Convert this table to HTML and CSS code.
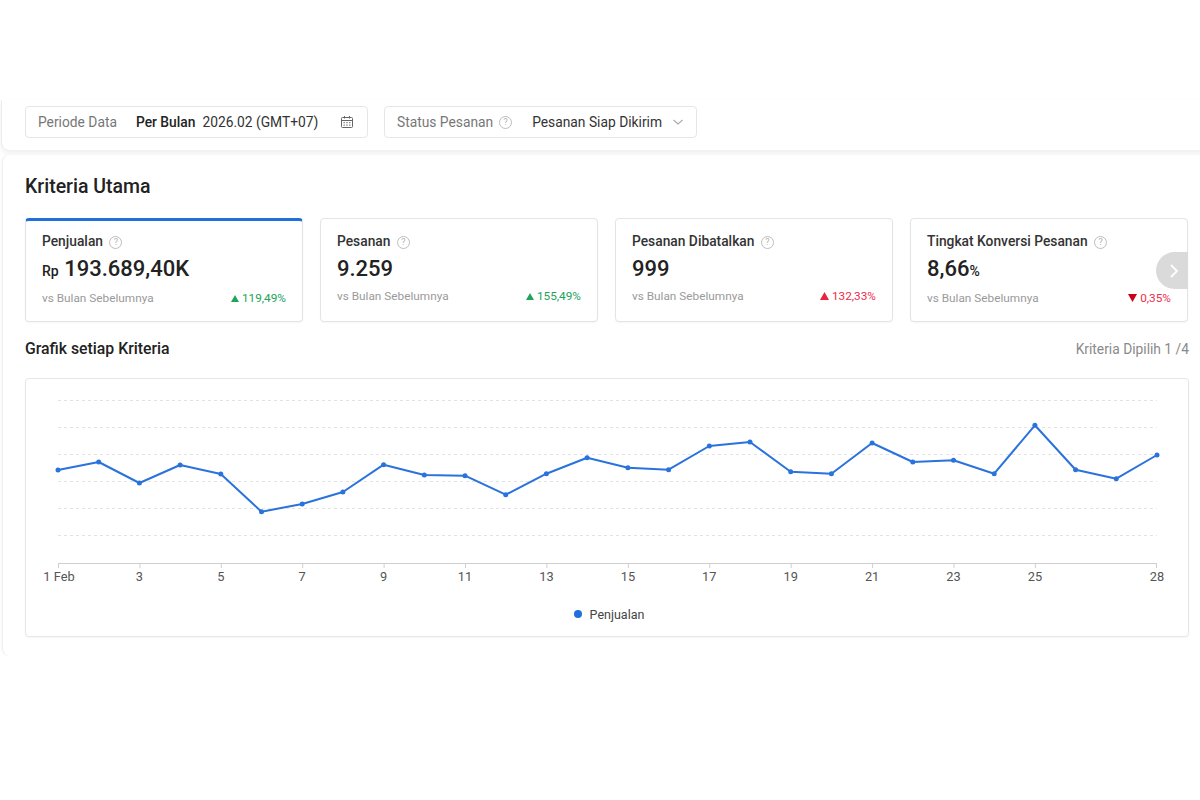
FILE: index.html
```html
<!DOCTYPE html>
<html lang="id">
<head>
<meta charset="utf-8">
<title>Kriteria Utama</title>
<link rel="stylesheet" href="styles.css">
</head>
<body>
<div class="page">
  <section class="filter-panel">
    <div class="filter-box filter-period">
      <span class="filter-label">Periode Data</span>
      <span class="filter-strong">Per Bulan</span>
      <span class="filter-value">2026.02 (GMT+07)</span>
      <svg class="cal-icon" width="14" height="14" viewBox="0 0 14 14">
        <rect x="1.5" y="2.5" width="11" height="10" rx="1" fill="none" stroke="#666" stroke-width="1"/>
        <line x1="1.5" y1="5.5" x2="12.5" y2="5.5" stroke="#666" stroke-width="1"/>
        <line x1="4.5" y1="1" x2="4.5" y2="3.5" stroke="#666" stroke-width="1"/>
        <line x1="9.5" y1="1" x2="9.5" y2="3.5" stroke="#666" stroke-width="1"/>
        <g fill="#777">
          <rect x="3.5" y="7" width="1.3" height="1.2"/><rect x="6.3" y="7" width="1.3" height="1.2"/><rect x="9.1" y="7" width="1.3" height="1.2"/>
          <rect x="3.5" y="9.5" width="1.3" height="1.2"/><rect x="6.3" y="9.5" width="1.3" height="1.2"/><rect x="9.1" y="9.5" width="1.3" height="1.2"/>
        </g>
      </svg>
    </div>
    <div class="filter-box filter-status">
      <span class="filter-label">Status Pesanan</span>
      <span class="help help-filter">?</span>
      <span class="filter-value status-value">Pesanan Siap Dikirim</span>
      <svg class="chev-icon" width="12" height="8" viewBox="0 0 12 8">
        <polyline points="1.5,2 6,6 10.5,2" fill="none" stroke="#aaa" stroke-width="1.1"/>
      </svg>
    </div>
  </section>

  <section class="main-panel">
    <div class="content">
      <h2 class="section-title">Kriteria Utama</h2>
      <div class="cards">
        <div class="card card-active">
          <div class="card-title">Penjualan <span class="help">?</span></div>
          <div class="card-value"><span class="unit-pre">Rp</span> 193.689,40K</div>
          <div class="card-foot">
            <span class="vs">vs Bulan Sebelumnya</span>
            <span class="delta up"><svg width="8" height="7" viewBox="0 0 8 7"><polygon points="4,0 8,7 0,7" fill="#22a35a"/></svg>119,49%</span>
          </div>
        </div>
        <div class="card">
          <div class="card-title">Pesanan <span class="help">?</span></div>
          <div class="card-value">9.259</div>
          <div class="card-foot">
            <span class="vs">vs Bulan Sebelumnya</span>
            <span class="delta up"><svg width="8" height="7" viewBox="0 0 8 7"><polygon points="4,0 8,7 0,7" fill="#22a35a"/></svg>155,49%</span>
          </div>
        </div>
        <div class="card">
          <div class="card-title">Pesanan Dibatalkan <span class="help">?</span></div>
          <div class="card-value">999</div>
          <div class="card-foot">
            <span class="vs">vs Bulan Sebelumnya</span>
            <span class="delta bad"><svg width="9" height="8" viewBox="0 0 9 8"><polygon points="4.5,0 9,8 0,8" fill="#e8243f"/></svg>132,33%</span>
          </div>
        </div>
        <div class="card card-last">
          <div class="card-title">Tingkat Konversi Pesanan <span class="help">?</span></div>
          <div class="card-value">8,66<span class="unit-post">%</span></div>
          <div class="card-foot">
            <span class="vs">vs Bulan Sebelumnya</span>
            <span class="delta bad"><svg width="9" height="8" viewBox="0 0 9 8"><polygon points="0,0 9,0 4.5,8" fill="#c8001a"/></svg>0,35%</span>
          </div>
          <div class="next-btn">
            <svg width="10" height="16" viewBox="0 0 10 16"><polyline points="2,2 8,8 2,14" fill="none" stroke="#fff" stroke-width="1.8"/></svg>
          </div>
        </div>
      </div>

      <div class="chart-head">
        <h3 class="chart-title">Grafik setiap Kriteria</h3>
        <span class="chart-count">Kriteria Dipilih 1 /4</span>
      </div>

      <div class="chart-box">
        <svg class="chart" width="1162" height="215" viewBox="0 0 1162 215">
          <g stroke="#e3e3e3" stroke-width="1" stroke-dasharray="3 3">
            <line x1="32" y1="21.5" x2="1131" y2="21.5"/>
            <line x1="32" y1="48.5" x2="1131" y2="48.5"/>
            <line x1="32" y1="75.5" x2="1131" y2="75.5"/>
            <line x1="32" y1="102.5" x2="1131" y2="102.5"/>
            <line x1="32" y1="129.5" x2="1131" y2="129.5"/>
            <line x1="32" y1="156.5" x2="1131" y2="156.5"/>
          </g>
          <line x1="32" y1="184.5" x2="1131" y2="184.5" stroke="#cfcfcf" stroke-width="1"/>
          <g stroke="#cfcfcf" stroke-width="1">
            <line x1="32.5" y1="184" x2="32.5" y2="189"/>
            <line x1="113.9" y1="184" x2="113.9" y2="189"/>
            <line x1="195.3" y1="184" x2="195.3" y2="189"/>
            <line x1="276.7" y1="184" x2="276.7" y2="189"/>
            <line x1="358.1" y1="184" x2="358.1" y2="189"/>
            <line x1="439.5" y1="184" x2="439.5" y2="189"/>
            <line x1="520.9" y1="184" x2="520.9" y2="189"/>
            <line x1="602.4" y1="184" x2="602.4" y2="189"/>
            <line x1="683.8" y1="184" x2="683.8" y2="189"/>
            <line x1="765.2" y1="184" x2="765.2" y2="189"/>
            <line x1="846.6" y1="184" x2="846.6" y2="189"/>
            <line x1="928" y1="184" x2="928" y2="189"/>
            <line x1="1009.4" y1="184" x2="1009.4" y2="189"/>
            <line x1="1130.5" y1="184" x2="1130.5" y2="189"/>
          </g>
          <g class="axis-labels" text-anchor="middle">
            <text x="33" y="202">1 Feb</text>
            <text x="113.4" y="202">3</text>
            <text x="194.8" y="202">5</text>
            <text x="276.2" y="202">7</text>
            <text x="357.6" y="202">9</text>
            <text x="439" y="202">11</text>
            <text x="520.4" y="202">13</text>
            <text x="601.9" y="202">15</text>
            <text x="683.3" y="202">17</text>
            <text x="764.7" y="202">19</text>
            <text x="846.1" y="202">21</text>
            <text x="927.5" y="202">23</text>
            <text x="1008.9" y="202">25</text>
            <text x="1131" y="202">28</text>
          </g>
          <polyline fill="none" stroke="#2a72dc" stroke-width="2" stroke-linejoin="round"
            points="32,91 72.7,83 113.4,104 154.1,86 194.8,95 235.5,132.7 276.2,125 316.9,113 357.6,85.7 398.3,96 439,96.7 479.7,115.7 520.4,94.7 561.1,78.7 601.9,88.7 642.6,90.7 683.3,67 724,63 764.7,92.7 805.4,94.7 846.1,64 886.8,83 927.5,81.3 968.2,94.7 1008.9,46.3 1049.6,90.7 1090.3,99.7 1131,76"/>
          <g fill="#2a72dc">
            <circle cx="32" cy="91" r="2.5"/><circle cx="72.7" cy="83" r="2.5"/><circle cx="113.4" cy="104" r="2.5"/><circle cx="154.1" cy="86" r="2.5"/>
            <circle cx="194.8" cy="95" r="2.5"/><circle cx="235.5" cy="132.7" r="2.5"/><circle cx="276.2" cy="125" r="2.5"/><circle cx="316.9" cy="113" r="2.5"/>
            <circle cx="357.6" cy="85.7" r="2.5"/><circle cx="398.3" cy="96" r="2.5"/><circle cx="439" cy="96.7" r="2.5"/><circle cx="479.7" cy="115.7" r="2.5"/>
            <circle cx="520.4" cy="94.7" r="2.5"/><circle cx="561.1" cy="78.7" r="2.5"/><circle cx="601.9" cy="88.7" r="2.5"/><circle cx="642.6" cy="90.7" r="2.5"/>
            <circle cx="683.3" cy="67" r="2.5"/><circle cx="724" cy="63" r="2.5"/><circle cx="764.7" cy="92.7" r="2.5"/><circle cx="805.4" cy="94.7" r="2.5"/>
            <circle cx="846.1" cy="64" r="2.5"/><circle cx="886.8" cy="83" r="2.5"/><circle cx="927.5" cy="81.3" r="2.5"/><circle cx="968.2" cy="94.7" r="2.5"/>
            <circle cx="1008.9" cy="46.3" r="2.5"/><circle cx="1049.6" cy="90.7" r="2.5"/><circle cx="1090.3" cy="99.7" r="2.5"/><circle cx="1131" cy="76" r="2.5"/>
          </g>
        </svg>
        <div class="legend">
          <span class="legend-dot"></span>
          <span class="legend-text">Penjualan</span>
        </div>
      </div>
    </div>
  </section>
</div>
</body>
</html>
```

FILE: styles.css
```css
* { box-sizing: border-box; }

html, body {
  margin: 0;
  padding: 0;
  background: #ffffff;
  overflow: hidden;
}

body {
  font-family: Roboto, "Noto Sans", "Liberation Sans", sans-serif;
  color: #333;
  width: 1200px;
  height: 800px;
}

.page {
  width: 1200px;
  overflow: hidden;
  padding-top: 100px;
}

/* top filter panel */
.filter-panel {
  margin-left: 1px;
  width: 1240px;
  background: #fff;
  border-left: 1px solid #ececec;
  border-radius: 0 0 0 8px;
  box-shadow: 0 3px 6px rgba(0, 0, 0, 0.07);
  padding: 6px 0 12px 23px;
  display: flex;
  gap: 16px;
}

.filter-box {
  height: 32px;
  border: 1px solid #e6e6e6;
  border-radius: 4px;
  display: flex;
  align-items: center;
  font-size: 13.8px;
  white-space: nowrap;
}

.filter-period { width: 343px; padding: 0 13px 0 12px; }
.filter-status { width: 313px; padding: 0 12px 0 12px; }

.filter-label { color: #777; }
.filter-strong { color: #222; font-weight: 500; margin-left: 19px; }
.filter-value { color: #333; margin-left: 7px; }
.status-value { margin-left: 20px; color: #333; }
.cal-icon { margin-left: auto; }
.chev-icon { margin-left: auto; }

.help {
  display: inline-flex;
  align-items: center;
  justify-content: center;
  width: 13px;
  height: 13px;
  border: 1px solid #bdbdbd;
  border-radius: 50%;
  color: #b3b3b3;
  font-size: 9px;
  font-weight: 400;
  line-height: 1;
  vertical-align: 1px;
  margin-left: 3px;
}
.help-filter { margin-left: 6px; }

/* main panel */
.main-panel {
  margin-top: 5px;
  margin-left: 2px;
  width: 1240px;
  background: #fff;
  border-left: 1px solid #efefef;
  border-radius: 8px 0 0 8px;
  box-shadow: -1px 0 3px rgba(0, 0, 0, 0.03);
  padding: 20px 0 19px 22px;
}

.content { width: 1164px; }

.section-title {
  margin: 0;
  font-size: 19.5px;
  line-height: 24px;
  font-weight: 500;
  color: #222;
}

.cards {
  margin-top: 19px;
  display: grid;
  grid-template-columns: repeat(4, 278px);
  gap: 17px;
}

.card {
  position: relative;
  height: 104px;
  border: 1px solid #e4e4e4;
  border-radius: 4px;
  background: #fff;
  box-shadow: 0 1px 2px rgba(0, 0, 0, 0.04);
  padding: 13px 16px 0 16px;
}

.card-active {
  border-top: 3px solid #1f6fdc;
  padding-top: 11px;
}

.card-title {
  font-size: 13.8px;
  line-height: 18px;
  font-weight: 500;
  color: #333;
  white-space: nowrap;
}

.card-value {
  margin-top: 5px;
  font-size: 22px;
  line-height: 28px;
  font-weight: 500;
  color: #222;
}
.unit-pre { font-size: 14px; font-weight: 500; }
.unit-post { font-size: 14px; font-weight: 500; }

.card-foot {
  margin-top: 5px;
  display: flex;
  justify-content: space-between;
  align-items: center;
  font-size: 11.8px;
  line-height: 16px;
}

.vs { color: #9a9a9a; }

.delta { display: inline-flex; align-items: center; gap: 3px; }
.delta.up { color: #22a35a; }
.delta.bad { color: #ee2c4a; }

.next-btn {
  position: absolute;
  right: -1px;
  top: 33px;
  width: 32px;
  height: 37px;
  border-radius: 19px 0 0 19px;
  background: #dadada;
  display: flex;
  align-items: center;
  justify-content: center;
  padding-left: 4px;
}

/* chart */
.chart-head {
  margin-top: 17px;
  display: flex;
  justify-content: space-between;
  align-items: center;
  height: 20px;
}

.chart-title {
  margin: 0;
  font-size: 15.8px;
  line-height: 20px;
  font-weight: 500;
  color: #222;
}

.chart-count {
  font-size: 13.8px;
  color: #8a8a8a;
}

.chart-box {
  margin-top: 19px;
  height: 259px;
  border: 1px solid #e6e6e6;
  border-radius: 4px;
  box-shadow: 0 1px 2px rgba(0, 0, 0, 0.04);
  background: #fff;
}

.chart { display: block; }

.axis-labels text {
  font-family: Roboto, "Noto Sans", sans-serif;
  font-size: 12.8px;
  fill: #555;
}

.legend {
  margin-top: 12px;
  height: 16px;
  display: flex;
  justify-content: center;
  align-items: center;
  gap: 8px;
  padding-left: 4px;
}

.legend-dot {
  width: 8px;
  height: 8px;
  border-radius: 50%;
  background: #1f6fdc;
}

.legend-text {
  font-size: 12.5px;
  color: #444;
}
```
